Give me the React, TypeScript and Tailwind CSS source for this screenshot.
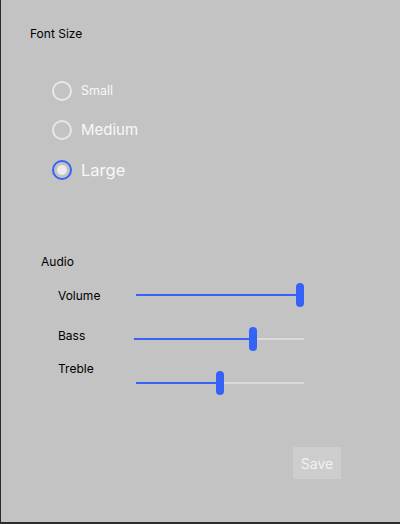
import { useState } from "react";

type Size = "small" | "medium" | "large";

const sizes: { id: Size; label: string; text: string; gap: string }[] = [
  { id: "small", label: "Small", text: "text-[12.5px]", gap: "" },
  { id: "medium", label: "Medium", text: "text-[15px]", gap: "mt-[19px]" },
  { id: "large", label: "Large", text: "text-[16.5px]", gap: "mt-[20px]" },
];

function Radio({ checked }: { checked: boolean }) {
  return (
    <span
      className={[
        "flex h-5 w-5 shrink-0 items-center justify-center rounded-full border-2",
        checked ? "border-[#3563f7]" : "border-[#e8e8e8]",
      ].join(" ")}
    >
      {checked && <span className="h-[10px] w-[10px] rounded-full bg-[#ebebeb]" />}
    </span>
  );
}

function Slider({ value, className }: { value: number; className: string }) {
  // thumb center stays 4px in from each end of the track
  return (
    <div className={["relative h-6", className].join(" ")}>
      <div className="absolute inset-x-0 top-[11px] h-[2px] bg-[#dadada]" />
      <div
        className="absolute left-0 top-[11px] h-[2px] bg-[#3563f7]"
        style={{ width: `${value}%` }}
      />
      <div
        className="absolute top-0 h-6 w-2 -translate-x-1/2 rounded-full bg-[#3563f7]"
        style={{ left: `calc(4px + (100% - 8px) * ${value / 100})` }}
      />
    </div>
  );
}

export default function App() {
  const [size, setSize] = useState<Size>("large");

  return (
    <div
      className="box-border h-[524px] w-[400px] border-b-2 border-l border-[#2b2b2b] bg-[#c3c3c3] text-black"
      style={{ fontFamily: "Inter, 'Noto Sans', sans-serif" }}
    >
      <div className="pl-[29px] pt-[26px] text-[12px] leading-4">Font Size</div>

      <div className="mt-[39px] flex flex-col pl-[51px]">
        {sizes.map((s) => (
          <label
            key={s.id}
            className={[
              "flex h-5 cursor-pointer items-center gap-[9px] text-[#f8f8f8]",
              s.gap,
            ].join(" ")}
            onClick={() => setSize(s.id)}
          >
            <Radio checked={size === s.id} />
            <span className={s.text}>{s.label}</span>
          </label>
        ))}
      </div>

      <div className="mt-[74px] pl-[40px] text-[12px] leading-4">Audio</div>

      <div className="mt-[13px] flex flex-col pl-[57px] text-[12px] leading-4">
        <div className="flex items-start">
          <span className="mt-[5px] w-[78px]">Volume</span>
          <Slider value={100} className="w-[168px]" />
        </div>
        <div className="mt-5 flex items-start">
          <span className="mt-[1px] w-[76px]">Bass</span>
          <Slider value={71} className="w-[170px]" />
        </div>
        <div className="mt-[10px] flex items-start">
          <span className="w-[78px]">Treble</span>
          <Slider value={50} className="mt-[10px] w-[168px]" />
        </div>
      </div>

      <div className="mt-[52px] flex justify-end pr-[59px]">
        <button className="h-8 w-12 bg-[#cdcdcd] text-[14px] text-[#f2f2f2]">
          Save
        </button>
      </div>
    </div>
  );
}
